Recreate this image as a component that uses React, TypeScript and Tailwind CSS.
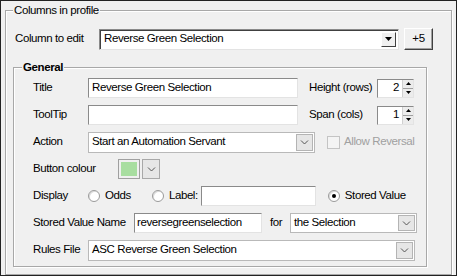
import React from "react";

const font = { fontFamily: '"Liberation Sans", Arial, sans-serif' };

function Sunken({ className = "", children }: { className?: string; children?: React.ReactNode }) {
  return (
    <div
      className={
        "bg-white border border-t-[#8a8a8a] border-l-[#8a8a8a] border-r-[#e3e3e3] border-b-[#e3e3e3] flex items-center " +
        className
      }
    >
      {children}
    </div>
  );
}

function Chevron() {
  return (
    <svg width="9" height="6" viewBox="0 0 9 6">
      <path d="M1 1.5 L4.5 5 L8 1.5" fill="none" stroke="#555" strokeWidth="1" />
    </svg>
  );
}

function ChevCombo({ className = "", text }: { className?: string; text: string }) {
  return (
    <div className={"bg-white border border-[#b9b9b9] flex items-stretch " + className}>
      <div className="flex-1 flex items-center pl-[3px] leading-none whitespace-nowrap overflow-hidden">{text}</div>
      <div className="w-[17px] m-[1px] bg-[#e6e6e6] border border-[#b4b4b4] flex items-center justify-center">
        <Chevron />
      </div>
    </div>
  );
}

function Spinner({ value, className = "" }: { value: string; className?: string }) {
  return (
    <Sunken className={"h-[19px] w-[37px] items-stretch " + className}>
      <div className="flex-1 flex items-center justify-end pr-[3px] leading-none">{value}</div>
      <div className="w-[11px] flex flex-col border-l border-[#d0d0d0]">
        <div className="flex-1 bg-[#ececec] border-b border-[#a0a0a0] flex items-center justify-center">
          <svg width="5" height="3" viewBox="0 0 5 3">
            <path d="M0 3 L2.5 0 L5 3 Z" fill="#000" />
          </svg>
        </div>
        <div className="flex-1 bg-[#ececec] flex items-center justify-center">
          <svg width="5" height="3" viewBox="0 0 5 3">
            <path d="M0 0 L2.5 3 L5 0 Z" fill="#000" />
          </svg>
        </div>
      </div>
    </Sunken>
  );
}

function Radio({ checked = false }: { checked?: boolean }) {
  return (
    <div className="w-[12px] h-[12px] rounded-full bg-white border border-[#9a9a9a] shadow-[inset_1px_1px_0_#dcdcdc] flex items-center justify-center">
      {checked && <div className="w-[4px] h-[4px] rounded-full bg-black" />}
    </div>
  );
}

function Label({ children, className = "" }: { children: React.ReactNode; className?: string }) {
  return <span className={"leading-none whitespace-nowrap " + className}>{children}</span>;
}

export default function App() {
  return (
    <div
      style={font}
      className="w-[457px] h-[276px] bg-[#f0f0f0] border border-[#222] text-[11.5px] tracking-[-0.4px] text-black overflow-hidden pl-[4px] pt-[2px]"
    >
      <fieldset className="w-[447px] h-[272px] border border-[#a8a8a8] shadow-[inset_1px_1px_0_#fff,1px_1px_0_#fff] pl-[7px] pr-[0px]">
        <legend className="px-[1px] leading-[15px] text-[11.5px] bg-[#f0f0f0]">Columns in profile</legend>
        <div className="flex items-center mt-[10px] ml-[2px] h-[22px]">
          <Label className="w-[84px]">Column to edit</Label>
          <div className="w-[300px] h-[21px] bg-white border border-t-[#8a8a8a] border-l-[#8a8a8a] border-r-[#e3e3e3] border-b-[#e3e3e3] shadow-[inset_1px_1px_0_#404040] flex items-stretch">
            <div className="flex-1 flex items-center pl-[4px] leading-none">Reverse Green Selection</div>
            <div className="w-[15px] my-[2px] mr-[2px] bg-[#f0f0f0] border border-t-[#fff] border-l-[#fff] border-r-[#404040] border-b-[#404040] flex items-center justify-center">
              <svg width="7" height="4" viewBox="0 0 7 4">
                <path d="M0 0 L7 0 L3.5 4 Z" fill="#000" />
              </svg>
            </div>
          </div>
          <div className="ml-[5px] w-[29px] h-[22px] bg-[#f0f0f0] border border-t-[#fff] border-l-[#fff] border-r-[#404040] border-b-[#404040] shadow-[inset_-1px_-1px_0_#a0a0a0] flex items-center justify-center leading-none">
            +5
          </div>
        </div>

        <fieldset className="mt-[10px] w-[414px] h-[207px] border border-[#a8a8a8] shadow-[inset_1px_1px_0_#fff,1px_1px_0_#fff] pl-[19px]">
          <legend className="ml-[-11px] px-[1px] leading-[15px] font-bold text-[11.5px] bg-[#f0f0f0]">General</legend>
          <div className="flex flex-col gap-[7px] mt-[3px]">
            {/* Title */}
            <div className="flex items-center h-[20px]">
              <Label className="w-[55px]">Title</Label>
              <Sunken className="w-[210px] h-[20px] pl-[3px]">
                <span className="leading-none">Reverse Green Selection</span>
              </Sunken>
              <Label className="ml-[11px] w-[68px]">Height (rows)</Label>
              <Spinner value="2" />
            </div>
            {/* ToolTip */}
            <div className="flex items-center h-[20px]">
              <Label className="w-[55px]">ToolTip</Label>
              <Sunken className="w-[210px] h-[20px]" />
              <Label className="ml-[11px] w-[68px]">Span (cols)</Label>
              <Spinner value="1" />
            </div>
            {/* Action */}
            <div className="flex items-center h-[20px]">
              <Label className="w-[55px]">Action</Label>
              <ChevCombo className="w-[227px] h-[21px]" text="Start an Automation Servant" />
              <div className="ml-[12px] w-[13px] h-[13px] border border-[#c4c4c4] bg-[#f4f4f4]" />
              <Label className="ml-[4px] text-[#a0a0a0]">Allow Reversal</Label>
            </div>
            {/* Button colour */}
            <div className="flex items-center h-[20px]">
              <Label className="w-[85px]">Button colour</Label>
              <div className="w-[22px] h-[20px] border border-[#a0a0a0] p-[2px] bg-[#f0f0f0]">
                <div className="w-full h-full bg-[#a8dea0]" />
              </div>
              <div className="ml-[2px] w-[18px] h-[20px] bg-[#e6e6e6] border border-[#a8a8a8] flex items-center justify-center">
                <Chevron />
              </div>
            </div>
            {/* Display */}
            <div className="flex items-center h-[20px]">
              <Label className="w-[55px]">Display</Label>
              <Radio />
              <Label className="ml-[5px]">Odds</Label>
              <div className="ml-[21px]">
                <Radio />
              </div>
              <Label className="ml-[5px]">Label:</Label>
              <Sunken className="ml-[3px] w-[115px] h-[20px]" />
              <div className="ml-[12px]">
                <Radio checked />
              </div>
              <Label className="ml-[5px]">Stored Value</Label>
            </div>
            {/* Stored Value Name */}
            <div className="flex items-center h-[20px]">
              <Label className="w-[101px]">Stored Value Name</Label>
              <Sunken className="w-[128px] h-[20px] pl-[2px]">
                <span className="leading-none">reversegreenselection</span>
              </Sunken>
              <Label className="ml-[8px] w-[20px]">for</Label>
              <ChevCombo className="w-[127px] h-[20px]" text="the Selection" />
            </div>
            {/* Rules File */}
            <div className="flex items-center h-[20px]">
              <Label className="w-[55px]">Rules File</Label>
              <ChevCombo className="w-[327px] h-[21px]" text="ASC Reverse Green Selection" />
            </div>
          </div>
        </fieldset>
      </fieldset>
    </div>
  );
}
